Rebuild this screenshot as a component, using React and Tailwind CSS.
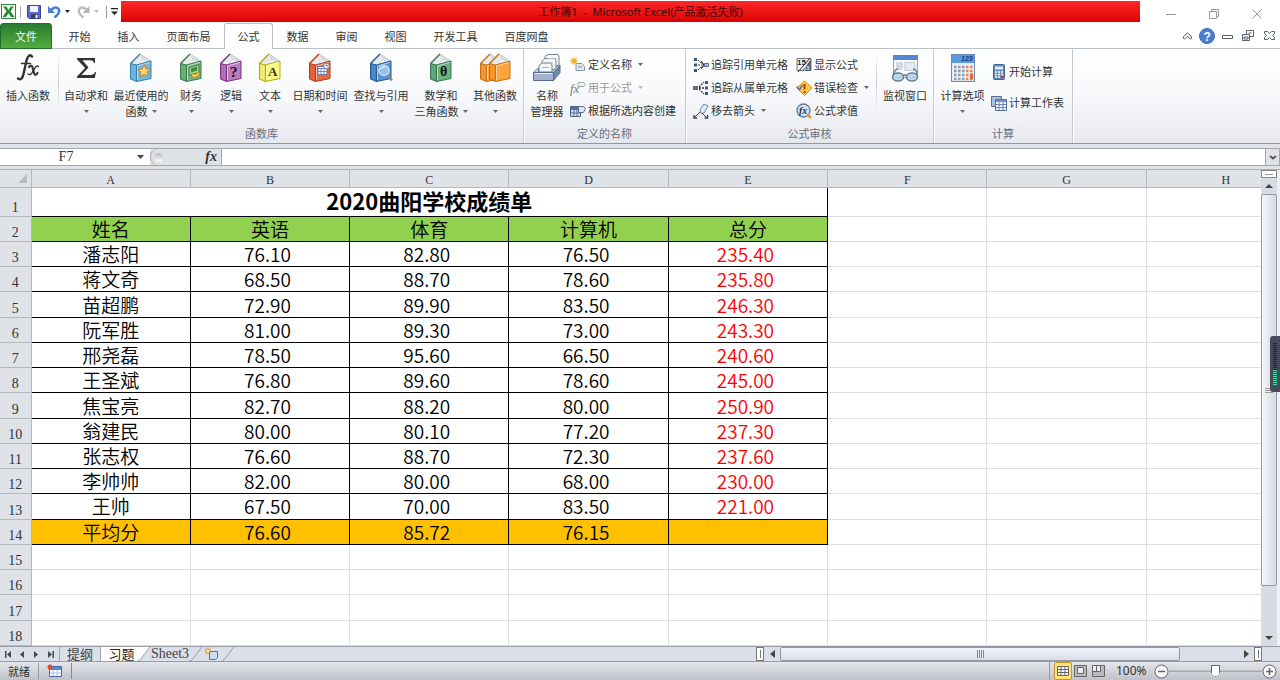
import { useState } from "react"

const tabs = [
  { name: "开始", width: "w-[49px]" },
  { name: "插入", width: "w-[49px]" },
  { name: "页面布局", width: "w-[71px]" },
  { name: "公式", width: "w-[49px]" },
  { name: "数据", width: "w-[49px]" },
  { name: "审阅", width: "w-[49px]" },
  { name: "视图", width: "w-[49px]" },
  { name: "开发工具", width: "w-[71px]" },
  { name: "百度网盘", width: "w-[71px]" },
]

const columns = ["A", "B", "C", "D", "E", "F", "G", "H"]

const students = [
  ["潘志阳", "76.10", "82.80", "76.50", "235.40"],
  ["蒋文奇", "68.50", "88.70", "78.60", "235.80"],
  ["苗超鹏", "72.90", "89.90", "83.50", "246.30"],
  ["阮军胜", "81.00", "89.30", "73.00", "243.30"],
  ["邢尧磊", "78.50", "95.60", "66.50", "240.60"],
  ["王圣斌", "76.80", "89.60", "78.60", "245.00"],
  ["焦宝亮", "82.70", "88.20", "80.00", "250.90"],
  ["翁建民", "80.00", "80.10", "77.20", "237.30"],
  ["张志权", "76.60", "88.70", "72.30", "237.60"],
  ["李帅帅", "82.00", "80.00", "68.00", "230.00"],
  ["王帅", "67.50", "70.00", "83.50", "221.00"],
]

function Arrow({ className = "text-[#666]" }) {
  return (
    <svg width="5" height="3" viewBox="0 0 5 3" className={`inline-block shrink-0 ${className}`}>
      <path d="M0 0h5L2.5 3z" fill="currentColor" />
    </svg>
  )
}

function Book({ side, front, edge, children }) {
  return (
    <svg width="24" height="30" viewBox="0 0 24 30">
      <path d="M1.500 10.500L11 1l10.500 7-14 4z" fill="#f7f9fa" stroke="#b4bcc4" strokeLinejoin="round" />
      <path d="M1.500 10.500L11 1" stroke={edge} strokeWidth="1.400" />
      <path d="M4 10l7.500-7 7.500 5M6.500 10.500L12.500 5l5 3.500M9 11l5-4.500" fill="none" stroke="#bcc4cc" strokeWidth=".8" />
      <path d="M1.500 10.500L7.500 12v16.500L1.500 26z" fill={side} stroke={edge} strokeLinejoin="round" />
      <path d="M3.500 12v13.500M5.500 12.500v14" stroke={front} strokeWidth=".8" />
      <path d="M7.500 12L22 8v17.500l-14.500 3z" fill={front} stroke={edge} strokeLinejoin="round" />
      <path d="M8.500 13v14M8.500 12.900L21 9.400" stroke="#fff" strokeOpacity=".55" />
      {children}
    </svg>
  )
}

function FxIcon() {
  return (
    <svg width="26" height="30" viewBox="0 0 26 30" fill="none" stroke="#333" strokeLinecap="round">
      <path d="M17 3.500c-2-2.500-4.500-.5-5.500 4L8.500 21c-1 4.500-3 6.500-5.500 4.500" strokeWidth="2.400" />
      <path d="M6.500 10.500h9" strokeWidth="1.500" />
      <path d="M14 14c2-2.500 3.500-1 4 2l1 4c.6 2.500 2 2.500 3.500 0" strokeWidth="2.200" />
      <path d="M23.500 13.500c-2-1.500-3 .5-5 4s-3 5-5.500 3.500" strokeWidth="1.300" />
    </svg>
  )
}

function SigmaIcon() {
  return (
    <svg width="26" height="30" viewBox="0 0 26 30">
      <path d="M4 5h18v5h-1c-.4-2-1-2.800-4-2.800H9.500l6 7.300-7 7.500h9c2.500 0 3.500-.8 4.500-3h1l-1.200 6H4v-1.500l8-8.500-8-8.800z" fill="#333" />
    </svg>
  )
}

function RecentIcon() {
  return (
    <Book side="#65b2dc" front="#74b9e4" edge="#347fae">
      <path d="M15 11.500l1.900 4.400 4.600.2-3.500 3 1.300 4.700-4.300-2.500-4.200 2.700 1.200-4.700-3.500-2.700 4.600-.6z" fill="#ffd778" stroke="#c57a12" strokeWidth=".9" />
    </Book>
  )
}

function FinanceIcon() {
  return (
    <Book side="#63a877" front="#75b482" edge="#3b7c4d">
      <path d="M10 14.500l10-3v8l-10 3z" fill="#9fd392" stroke="#356f36" strokeWidth=".8" />
      <path d="M12 15.500l6-2v4l-6 2z" fill="#3f8b45" />
      <path d="M12 22l3-1.500 1.500 1 3.500-3.500v4.500l-5 2.500z" fill="#ffd24a" stroke="#a97507" strokeWidth=".7" />
    </Book>
  )
}

function LogicIcon() {
  return (
    <Book side="#a966ae" front="#be79c1" edge="#79357f">
      <text x="11" y="24" fontSize="15" fontWeight="700" fontFamily="Liberation Serif" fill="#111">?</text>
    </Book>
  )
}

function TextIcon() {
  return (
    <Book side="#ece45c" front="#fbf67c" edge="#b5aa14">
      <text x="10" y="23" fontSize="13" fontWeight="700" fontFamily="Liberation Serif" fill="#333">A</text>
    </Book>
  )
}

function DateIcon() {
  return (
    <Book side="#e35b36" front="#ee6841" edge="#b33a1a">
      <path d="M10 13.500h9v8h-9z" fill="#fff" stroke="#54649a" strokeWidth=".8" />
      <path d="M10 15.500h9M13 15v6M16 15v6M10 18.500h9" stroke="#5577bd" strokeWidth=".8" />
      <circle cx="18.500" cy="13" r="2.800" fill="#f2f5ff" stroke="#666" strokeWidth=".7" />
      <path d="M18.500 11.500V13h1.500" stroke="#333" strokeWidth=".7" fill="none" />
    </Book>
  )
}

function LookupIcon() {
  return (
    <Book side="#3c7ec1" front="#5495d6" edge="#275a91">
      <path d="M18.500 21.500l4.500 6" stroke="#888" strokeWidth="2.400" />
      <circle cx="15" cy="17.500" r="5" fill="#9fcbf5" fillOpacity=".85" stroke="#d5dce3" strokeWidth="1.500" />
      <path d="M12.500 16q1-2.500 3.500-2" stroke="#fff" fill="none" />
    </Book>
  )
}

function MathIcon() {
  return (
    <Book side="#5a9f72" front="#6db183" edge="#387650">
      <text x="11" y="23" fontSize="14" fontWeight="700" fontFamily="Liberation Serif" fill="#111">θ</text>
    </Book>
  )
}

function MoreIcon() {
  return (
    <span className="flex -space-x-[15px]">
      <Book side="#ec8d22" front="#ffa33b" edge="#c57218" />
      <Book side="#ec8d22" front="#ffa33b" edge="#c57218" />
    </span>
  )
}

function NameManagerIcon() {
  return (
    <svg width="30" height="30" viewBox="0 0 30 30">
      <g fill="#f5f8fb" stroke="#76828f">
        <path d="M13 3.500l3-2h10l1 2v9H13z" />
        <path d="M10 8l3-2.500h10l1 2v9H10z" />
        <path d="M7 12.500L10 10h9l1 2v8H7z" />
      </g>
      <path d="M16 5.500h8M13 10h8M10 14.500h7" stroke="#aab4be" />
      <path d="M1.500 19.500l5-4.500v4h13l7-7 1.500 1-6 7z" fill="#cbd7e8" stroke="#687b98" />
      <path d="M1.500 19.500h20v8h-20z" fill="#a3b3cf" stroke="#52688d" />
      <path d="M2.500 20.500h18" stroke="#eef3fa" />
      <path d="M21.500 19.500l6.500-7v7l-6.500 8z" fill="#7188ad" stroke="#52688d" />
    </svg>
  )
}

function WatchIcon() {
  return (
    <svg width="30" height="30" viewBox="0 0 30 30">
      <path d="M3.500 2.500h24v22h-24z" fill="#f8fafc" stroke="#8ea5c0" />
      <path d="M3 2h25v5H3z" fill="#5486d8" />
      <path d="M6 10h7M6 12h7M6 14h7M6 16h6" stroke="#aeb9c4" />
      <path d="M15 9.500h10v8H15z" fill="#e5ecf3" stroke="#c1cad2" />
      <g fill="#afd2ec" fillOpacity=".85" stroke="#6d7e8b" strokeWidth="1.500">
        <ellipse cx="8" cy="24" rx="5.500" ry="4" />
        <ellipse cx="22" cy="24" rx="5.500" ry="4" />
      </g>
      <path d="M13 23q2-2 4 0M3 22q2-6 5-6M27 22q0-6-4-6" fill="none" stroke="#697986" strokeWidth="1.300" />
    </svg>
  )
}

function CalcOptionsIcon() {
  return (
    <svg width="26" height="30" viewBox="0 0 26 30">
      <rect x="1.500" y="1.500" width="23" height="27" fill="#e5effa" stroke="#6a8bb8" />
      <path d="M2 2h22v8H2z" fill="#5c97e4" />
      <text x="11" y="8" fontSize="7" fontStyle="italic" fontWeight="700" fontFamily="Liberation Sans" fill="#17408a">123</text>
      <g strokeWidth="2.500" strokeDasharray="2.500 1.500">
        <path d="M4 14h11M4 18h11M4 22h11M4 26h11" stroke="#929daa" />
        <path d="M16 14h7M16 18h7M16 22h7M16 26h7" stroke="#e78b4b" />
      </g>
      <path d="M20 20.500h3v6h-3z" fill="#e8663d" />
    </svg>
  )
}

function SmallIcon({ children }) {
  return <svg width="16" height="16" viewBox="0 0 16 16" className="shrink-0">{children}</svg>
}

const defineNameIcon = (
  <SmallIcon>
    <path d="M6 6.500h6l2.500 3v4H6z" fill="#dce7f2" stroke="#8b97a5" />
    <path d="M8 10h4" stroke="#7e8a98" />
    <path d="M4 .5v7M.5 4h7M1.500 1.500l5 5M6.500 1.500l-5 5" stroke="#f0b323" strokeWidth="1.400" />
  </SmallIcon>
)

const useInFormulaIcon = (
  <SmallIcon>
    <text x="0" y="13" fontSize="13" fontStyle="italic" fontFamily="Liberation Serif" fill="#777">fx</text>
    <path d="M8 2.500h6l1.500 2-1.500 2H8z" fill="#f1f1f1" stroke="#aaa" />
  </SmallIcon>
)

const createIcon = (
  <SmallIcon>
    <path d="M.5 3.500h10v10H.5z" fill="#cdd9ee" stroke="#4f6287" />
    <path d="M1 4h9v3H1z" fill="#5873a8" />
    <path d="M1 10h9M4 7v6M7 7v6" stroke="#5f729a" />
    <path d="M8.500 3.500h5l2 2-2 4h-5z" fill="#dce7f2" stroke="#5f718b" />
  </SmallIcon>
)

const precedentsIcon = (
  <SmallIcon>
    <path d="M1 1h3v3H1zM1 6.500h3v3H1zM1 12h3v3H1z" fill="#3c5376" />
    <path d="M5 3l3 3M5 8h4M5 13l3-3" stroke="#333" strokeDasharray="2 1" />
    <path d="M8 4.500l3 3.500-3 3.500" fill="none" stroke="#333" strokeWidth="1.300" />
    <path d="M11.500 6.500h4v3h-4z" fill="#a9bcd4" stroke="#546e91" />
  </SmallIcon>
)

const dependentsIcon = (
  <SmallIcon>
    <path d="M12 1h3v3h-3zM12 6.500h3v3h-3zM12 12h3v3h-3z" fill="#3c5376" />
    <path d="M6 7l5-5M6 8h5M6 9l5 5" stroke="#333" strokeWidth="1.300" strokeDasharray="2 1" />
    <path d="M0 6h5v4H0z" fill="#546e91" />
  </SmallIcon>
)

const removeArrowsIcon = (
  <SmallIcon>
    <path d="M7 7l4-6 4 2-4 7-3 .5z" fill="#e4ebf8" stroke="#6d7d99" />
    <path d="M7 9l-5 5M9 10l4 4" stroke="#334a6b" fill="none" />
    <path d="M1 12v3h3M14.500 12v3h-3" stroke="#334a6b" fill="none" strokeWidth="1.500" />
  </SmallIcon>
)

const showFormulasIcon = (
  <SmallIcon>
    <path d="M1 1.500h14v12H1z" fill="#f6f6f6" stroke="#777" />
    <path d="M15 2v12H6z" fill="#53627a" />
    <text x="1" y="8" fontSize="8" fontWeight="700" fontFamily="Liberation Sans" fill="#222">15</text>
    <text x="8" y="13" fontSize="8" fontStyle="italic" fontFamily="Liberation Serif" fill="#fff">fx</text>
    <path d="M2 15L14 1" stroke="#222" />
  </SmallIcon>
)

const errorCheckIcon = (
  <SmallIcon>
    <path d="M8.500 1L16 8l-7.500 7.500L1 8z" fill="#ffcb45" stroke="#d28a12" />
    <path d="M8.500 4v5.500M8.500 11v2" stroke="#c8321a" strokeWidth="2" />
    <path d="M.5 6.500l3 3.500 3-5" fill="none" stroke="#5874a0" strokeWidth="1.500" />
  </SmallIcon>
)

const evaluateIcon = (
  <SmallIcon>
    <circle cx="7.500" cy="7.500" r="6.500" fill="#cfe4fa" stroke="#66788c" strokeWidth="1.300" />
    <text x="3" y="11" fontSize="10" fontWeight="700" fontStyle="italic" fontFamily="Liberation Serif" fill="#26354a">fx</text>
    <path d="M12 12l3 3" stroke="#e29632" strokeWidth="2.500" />
  </SmallIcon>
)

const calcNowIcon = (
  <SmallIcon>
    <rect x="2.500" y=".5" width="11" height="15" rx="1" fill="#6689bd" stroke="#45638f" />
    <path d="M4 2.500h8v3H4z" fill="#dbe9f8" />
    <path d="M4 8h8M4 10.500h8M4 13h8" stroke="#fff" strokeWidth="1.500" strokeDasharray="2 1" />
    <path d="M10 12h2v2h-2z" fill="#da3a2c" />
  </SmallIcon>
)

const calcSheetIcon = (
  <SmallIcon>
    <path d="M.5 1.500h10v10H.5z" fill="#a9bfe0" stroke="#5c7094" />
    <path d="M4.500 4.500h11v11h-11z" fill="#f3f7ff" stroke="#526f9e" />
    <path d="M5 5h10v2H5z" fill="#7694c5" />
    <path d="M8 5v10M12 5v10M5 9.500h10M5 12.500h10" stroke="#6d86b0" />
  </SmallIcon>
)

// a large ribbon button, the second line is either text or the drop arrow
function BigButton({ icon, label, second, arrow, width }) {
  return (
    <button type="button" className={`flex shrink-0 flex-col items-center whitespace-nowrap ${width}`}>
      <span className="flex h-8 items-center justify-center">{icon}</span>
      <span className="mt-[3px] leading-4">{label}</span>
      <span className="flex h-4 items-center gap-1 leading-4">
        {second}
        {arrow && <Arrow />}
      </span>
    </button>
  )
}

function SmallButton({ icon, label, arrow, disabled }) {
  return (
    <button
      type="button"
      disabled={disabled}
      className="flex h-[23px] items-center gap-[2px] whitespace-nowrap disabled:text-[#999]"
    >
      {icon}
      <span>{label}</span>
      {arrow && <Arrow className={disabled ? "ml-1 text-[#bbb]" : "ml-1 text-[#666]"} />}
    </button>
  )
}

function Group({ title, width, children }) {
  return (
    <section className={`flex shrink-0 flex-col border-r border-[#c5cad0] shadow-[1px_0_0_#fff] ${width}`}>
      <div className="flex flex-1 pt-[3px]">{children}</div>
      <h2 className="h-5 text-center leading-5 text-[#666e7c]">{title}</h2>
    </section>
  )
}

function Divider() {
  return <div className="mx-[2px] h-[60px] w-px shrink-0 bg-linear-to-b from-transparent via-[#c8ccd1] to-transparent" />
}

function TitleBar() {
  return (
    <header className="flex h-[23px] shrink-0 bg-white">
      <div className="flex w-[121px] shrink-0 items-center pl-px">
        <svg width="16" height="16" viewBox="0 0 16 16">
          <rect x=".5" y=".5" width="14" height="14" fill="#f4faf3" stroke="#348242" />
          <path d="M2 2.500h3.500l2 3.500 2.200-3.500h3L9.500 7.300l4 5.700H10L7.500 9.300 5 13H1.500l4-5.700z" fill="#298a36" />
        </svg>
        <span className="ml-[3px] h-3 w-px bg-[#aaa]" />
        <button type="button" aria-label="保存" className="ml-[6px]">
          <svg width="14" height="14" viewBox="0 0 14 14">
            <path d="M.5.5h13v13H2L.5 12z" fill="#5a6ad0" stroke="#3b479f" />
            <path d="M3 1h8v6H3z" fill="#eef2ff" />
            <path d="M4 9h7v4.500H4z" fill="#3b3f66" />
            <path d="M8.500 10h2v3h-2z" fill="#fff" />
          </svg>
        </button>
        <button type="button" aria-label="撤消" className="ml-[7px]">
          <svg width="13" height="14" viewBox="0 0 13 14">
            <path d="M0 1v7h7z" fill="#4a80d6" />
            <path d="M3 5q5-4.500 7.500-1t-4 8.500" fill="none" stroke="#4a80d6" strokeWidth="2.600" />
          </svg>
        </button>
        <Arrow className="ml-1 text-[#222]" />
        <button type="button" aria-label="恢复" className="ml-[7px]">
          <svg width="13" height="14" viewBox="0 0 13 14">
            <path d="M12.500 1v7h-7z" fill="#b5b5b5" />
            <path d="M10 5Q5 .5 2.500 4t4 8.500" fill="none" stroke="#bdbdbd" strokeWidth="2.400" />
          </svg>
        </button>
        <Arrow className="ml-1 text-[#bbb]" />
        <span className="ml-[7px] h-3 w-px bg-[#999]" />
        <button type="button" aria-label="自定义快速访问工具栏" className="ml-1">
          <svg width="7" height="8" viewBox="0 0 7 8">
            <path d="M0 0h7v1.300H0zM0 3.500h7L3.500 7z" fill="#222" />
          </svg>
        </button>
      </div>
      <h1 className="mt-px mb-px flex-1 bg-linear-to-b from-[#ff2626] to-[#dc0000] pl-5 text-center font-['Noto_Sans','Noto_Sans_CJK_SC',sans-serif] text-[11px] leading-[21px] text-[#3a0505]">
        工作簿1 &nbsp;-&nbsp; Microsoft Excel(产品激活失败)
      </h1>
      <div className="flex w-[140px] shrink-0 items-center justify-between pt-1 pr-[18px] pl-[26px] text-[#999]">
        <button type="button" aria-label="最小化">
          <svg width="10" height="10" viewBox="0 0 10 10"><path d="M0 5.500h10" stroke="currentColor" /></svg>
        </button>
        <button type="button" aria-label="还原">
          <svg width="10" height="10" viewBox="0 0 10 10" fill="none" stroke="currentColor">
            <path d="M.5 2.500h7v7h-7zM2.500 2.500v-2h7v7h-2" />
          </svg>
        </button>
        <button type="button" aria-label="关闭">
          <svg width="10" height="10" viewBox="0 0 10 10"><path d="M.5.5l9 9M9.500.5l-9 9" stroke="currentColor" /></svg>
        </button>
      </div>
    </header>
  )
}

function TabBar({ active, onSelect }) {
  return (
    <nav className="flex h-[26px] shrink-0 border-b border-[#b9c0c9] bg-white">
      <button
        type="button"
        className="mr-[3px] h-[26px] w-[52px] rounded-t-[3px] border border-[#1f6f2b] bg-linear-to-b from-[#2b7c33] to-[#52ad3d] text-white"
      >
        文件
      </button>
      {tabs.map(({ name, width }) => (
        <button
          key={name}
          type="button"
          onClick={() => onSelect(name)}
          className={`${width} h-[26px] ${
            name === active ? "rounded-t-[3px] border border-b-0 border-[#b9c0c9] bg-white" : ""
          }`}
        >
          {name}
        </button>
      ))}
      <div className="ml-auto flex items-center gap-[7px] pr-[5px] text-[#59616b]">
        <button type="button" aria-label="功能区最小化">
          <svg width="9" height="8" viewBox="0 0 9 8" fill="none" stroke="currentColor">
            <path d="M.5 4.500l4-3.500 4 3.500v2l-1 .5-3-2.500L1.500 7l-1-.5z" />
          </svg>
        </button>
        <button type="button" aria-label="帮助">
          <svg width="16" height="16" viewBox="0 0 16 16">
            <circle cx="8" cy="8" r="7.500" fill="#4a7dd0" stroke="#3a69b5" />
            <text x="4.500" y="12.500" fontSize="12" fontWeight="700" fontFamily="Liberation Sans" fill="#fff">?</text>
          </svg>
        </button>
        <button type="button" aria-label="最小化工作簿">
          <svg width="11" height="10" viewBox="0 0 11 10" fill="#fff" stroke="currentColor"><path d="M.5 4.500h10v3H.5z" /></svg>
        </button>
        <button type="button" aria-label="还原工作簿" className="ml-[2px]">
          <svg width="12" height="11" viewBox="0 0 12 11" fill="#fff" stroke="currentColor">
            <path d="M4.500.5h7v6h-7z" />
            <path d="M.5 4.500h7v6h-7zM2 7h4v2H2zM6.500 3h3" />
          </svg>
        </button>
        <button type="button" aria-label="关闭工作簿" className="ml-[3px]">
          <svg width="11" height="9" viewBox="0 0 11 9" fill="#fff" stroke="currentColor">
            <path d="M.5.5h3l2 2 2-2h3v2l-2 2 2 2v2h-3l-2-2-2 2h-3v-2l2-2-2-2z" />
          </svg>
        </button>
      </div>
    </nav>
  )
}

function Ribbon() {
  return (
    <div className="flex h-[95px] shrink-0 overflow-hidden border-b border-[#9298a3] bg-linear-to-b from-white via-[#f8f9fb] to-[#e5e8ed]">
      <Group title="函数库" width="w-[524px]">
        <BigButton icon={<FxIcon />} label="插入函数" width="w-[56px]" />
        <Divider />
        <BigButton icon={<SigmaIcon />} label="自动求和" arrow width="w-[50px]" />
        <BigButton icon={<RecentIcon />} label="最近使用的" second="函数" arrow width="w-[60px]" />
        <BigButton icon={<FinanceIcon />} label="财务" arrow width="w-[40px]" />
        <BigButton icon={<LogicIcon />} label="逻辑" arrow width="w-[40px]" />
        <BigButton icon={<TextIcon />} label="文本" arrow width="w-[38px]" />
        <BigButton icon={<DateIcon />} label="日期和时间" arrow width="w-[62px]" />
        <BigButton icon={<LookupIcon />} label="查找与引用" arrow width="w-[60px]" />
        <BigButton icon={<MathIcon />} label="数学和" second="三角函数" arrow width="w-[60px]" />
        <BigButton icon={<MoreIcon />} label="其他函数" arrow width="w-[48px]" />
      </Group>
      <Group title="定义的名称" width="w-[162px]">
        <BigButton icon={<NameManagerIcon />} label="名称" second="管理器" width="w-[46px]" />
        <div className="pt-px">
          <SmallButton icon={defineNameIcon} label="定义名称" arrow />
          <SmallButton icon={useInFormulaIcon} label="用于公式" arrow disabled />
          <SmallButton icon={createIcon} label="根据所选内容创建" />
        </div>
      </Group>
      <Group title="公式审核" width="w-[248px]">
        <div className="ml-[7px] w-[103px] pt-px">
          <SmallButton icon={precedentsIcon} label="追踪引用单元格" />
          <SmallButton icon={dependentsIcon} label="追踪从属单元格" />
          <SmallButton icon={removeArrowsIcon} label="移去箭头" arrow />
        </div>
        <div className="w-[78px] pt-px">
          <SmallButton icon={showFormulasIcon} label="显示公式" />
          <SmallButton icon={errorCheckIcon} label="错误检查" arrow />
          <SmallButton icon={evaluateIcon} label="公式求值" />
        </div>
        <Divider />
        <BigButton icon={<WatchIcon />} label="监视窗口" width="w-[52px]" />
      </Group>
      <Group title="计算" width="w-[139px]">
        <BigButton icon={<CalcOptionsIcon />} label="计算选项" arrow width="w-[57px]" />
        <div className="flex flex-col gap-2 pt-2">
          <SmallButton icon={calcNowIcon} label="开始计算" />
          <SmallButton icon={calcSheetIcon} label="计算工作表" />
        </div>
      </Group>
    </div>
  )
}

function FormulaBar() {
  return (
    <div className="flex h-[26px] shrink-0 border-b border-[#a9afb8] bg-[#dfe3e8] pt-1 pb-[3px]">
      <div className="flex flex-1 border-y border-[#a3a8b0]">
        <div className="flex w-[150px] items-center bg-white">
          <input
            aria-label="名称框"
            defaultValue="F7"
            className="w-[132px] bg-transparent text-center font-['Liberation_Serif','Noto_Sans_CJK_SC',serif] text-[14px] leading-4 outline-none"
          />
          <button type="button" aria-label="名称列表" className="flex items-center pl-[5px]">
            <svg width="7" height="4" viewBox="0 0 7 4"><path d="M0 0h7L3.500 4z" fill="#444" /></svg>
          </button>
        </div>
        <div className="flex w-[72px] items-center justify-between rounded-l-full border-r border-l border-[#a3a8b0] bg-[#dfe3e8] pr-1 pl-[3px]">
          <span className="size-[9px] rounded-full bg-linear-to-b from-[#b6bac0] to-white" />
          <button
            type="button"
            aria-label="插入函数"
            className="font-['Liberation_Serif',serif] text-[14px] leading-4 font-bold text-[#333] italic"
          >
            fx
          </button>
        </div>
        <input aria-label="编辑栏" className="min-w-0 flex-1 bg-white px-1 outline-none" />
        <button type="button" aria-label="展开编辑栏" className="flex w-[15px] items-center justify-center border-x border-[#a3a8b0]">
          <svg width="8" height="5" viewBox="0 0 8 5"><path d="M1 1l3 2.500L7 1" fill="none" stroke="#555" strokeWidth="1.800" /></svg>
        </button>
      </div>
    </div>
  )
}

function EmptyCells({ count }) {
  return Array.from({ length: count }, (_, i) => <td key={i} className="border border-[#dcdee1]" />)
}

function RowHead({ n }) {
  return (
    <th
      scope="row"
      className="border-r border-b border-[#b4b9c0] bg-[#dfe3e8] align-bottom font-['Liberation_Serif',serif] text-[14px] leading-4 font-normal text-[#333]"
    >
      {n}
    </th>
  )
}

function Sheet() {
  return (
    <table className="h-full w-[1306px] table-fixed border-collapse text-[19px] leading-[22px] font-[350] text-black">
      <colgroup>
        <col className="w-[31px]" />
        {columns.map((c) => <col key={c} />)}
      </colgroup>
      <thead>
        <tr className="h-[17px] bg-[#dfe3e8] font-['Liberation_Serif',serif] text-[12px] leading-[14px] text-[#333]">
          <th className="border-r border-b border-[#b4b9c0]">
            <svg width="9" height="9" viewBox="0 0 9 9" className="ml-auto mr-1"><path d="M9 0v9H0z" fill="#b7bcc2" /></svg>
          </th>
          {columns.map((c) => (
            <th key={c} scope="col" className="border-r border-b border-[#b4b9c0] align-bottom font-normal">{c}</th>
          ))}
        </tr>
      </thead>
      <tbody>
        <tr className="h-[29px]">
          <RowHead n={1} />
          <td colSpan={5} className="border-r border-b border-black pb-[3px] text-center text-[22px] font-bold text-black">
            2020曲阳学校成绩单
          </td>
          <EmptyCells count={3} />
        </tr>
        <tr className="h-[25px]">
          <RowHead n={2} />
          {["姓名", "英语", "体育", "计算机", "总分"].map((h) => (
            <td key={h} className="border border-black bg-[#92d050] text-center">{h}</td>
          ))}
          <EmptyCells count={3} />
        </tr>
        {students.map(([name, ...scores], i) => (
          <tr key={name} className="h-[25px]">
            <RowHead n={i + 3} />
            <td className="border border-black text-center">{name}</td>
            {scores.map((score, j) => (
              <td key={j} className={`border border-black pr-[5px] text-center ${j === 3 ? "text-[#ff0000]" : ""}`}>
                {score}
              </td>
            ))}
            <EmptyCells count={3} />
          </tr>
        ))}
        <tr className="h-[25px]">
          <RowHead n={14} />
          <td className="border border-black bg-[#ffc000] text-center">平均分</td>
          {["76.60", "85.72", "76.15", ""].map((avg, j) => (
            <td key={j} className="border border-black bg-[#ffc000] pr-[5px] text-center">{avg}</td>
          ))}
          <EmptyCells count={3} />
        </tr>
        {[15, 16, 17, 18].map((n) => (
          <tr key={n} className="h-[25px]">
            <RowHead n={n} />
            <EmptyCells count={8} />
          </tr>
        ))}
      </tbody>
    </table>
  )
}

function VerticalScroll() {
  return (
    <div className="flex w-[19px] shrink-0 flex-col border-r-[3px] border-[#eef0f2] bg-[#d7dbe3]">
      <span className="flex h-2 items-center justify-center border border-[#888] bg-white">
        <span className="h-px w-2 bg-[#999]" />
      </span>
      <button type="button" aria-label="向上滚动" className="flex h-4 items-center justify-center">
        <svg width="8" height="4" viewBox="0 0 8 4"><path d="M0 4h8L4 0z" fill="#444" /></svg>
      </button>
      <div className="flex flex-[392] flex-col items-center justify-center gap-px rounded-[2px] border border-[#9299a8] bg-linear-to-r from-[#f4f6fa] to-[#d5dae4]">
        <span className="h-px w-2 bg-[#999]" />
        <span className="h-px w-2 bg-[#999]" />
        <span className="h-px w-2 bg-[#999]" />
      </div>
      <div className="flex-[44]" />
      <button type="button" aria-label="向下滚动" className="flex h-4 items-center justify-center">
        <svg width="8" height="4" viewBox="0 0 8 4"><path d="M0 0h8L4 4z" fill="#444" /></svg>
      </button>
    </div>
  )
}

function NavArrow({ label, d }) {
  return (
    <button type="button" aria-label={label}>
      <svg width="7" height="7" viewBox="0 0 7 7"><path d={d} fill="#444b55" /></svg>
    </button>
  )
}

function TabEdge({ fill = "none" }) {
  return (
    <svg width="14" height="14" viewBox="0 0 14 14" className="shrink-0">
      <path d="M0 0h13L3 13q-1 1-3 1z" fill={fill} />
      <path d="M13 0L3 13q-1 1-3 1" fill="none" stroke="#9aa0aa" />
    </svg>
  )
}

function SheetTabs() {
  return (
    <div className="flex h-4 shrink-0 border-t border-b border-[#979ca6] bg-[#dbdfe7] text-[13px] leading-[14px]">
      <div className="flex w-[60px] shrink-0 items-center gap-[7px] border-r border-[#a3a8b0] pl-[5px]">
        <NavArrow label="第一张" d="M0 0h1.500v7H0zM6 0v7L2 3.500z" />
        <NavArrow label="上一张" d="M5 0v7L1 3.500z" />
        <NavArrow label="下一张" d="M1 0v7l4-3.500z" />
        <NavArrow label="最后一张" d="M1 0v7l4-3.500zM5.500 0H7v7H5.500z" />
      </div>
      <button type="button" className="w-[41px] border-r border-[#a3a8b0] text-[#444]">提纲</button>
      <button type="button" className="w-9 bg-white pl-[5px] text-[#222]">习题</button>
      <TabEdge fill="#fff" />
      <button type="button" className="font-['Liberation_Serif',serif] text-[14px] text-[#444]">Sheet3</button>
      <TabEdge />
      <button type="button" aria-label="插入工作表" className="flex items-center">
        <svg width="18" height="14" viewBox="0 0 18 14">
          <path d="M6.500 4.500h8v6l-2 2h-6z" fill="#cfdcf2" stroke="#56739f" />
          <path d="M5 .5v7M1.500 4h7M2.500 1.500l5 5M7.500 1.500l-5 5" stroke="#e08a1e" />
          <circle cx="5" cy="4" r="1.200" fill="#fff3b0" />
        </svg>
      </button>
      <TabEdge />
      <div className="ml-auto flex w-[524px] shrink-0">
        <span className="flex w-[8px] items-center justify-center border border-[#777] bg-white"><span className="h-2 w-px bg-[#777]" /></span>
        <button type="button" aria-label="向左滚动" className="flex w-4 items-center justify-center">
          <svg width="5" height="8" viewBox="0 0 5 8"><path d="M5 0v8L0 4z" fill="#444" /></svg>
        </button>
        <div className="flex w-[400px] items-center justify-center gap-px rounded-[2px] border border-[#9299a8] bg-linear-to-b from-[#f2f4f9] to-[#d9dde6]">
          <span className="h-2 w-px bg-[#888]" />
          <span className="h-2 w-px bg-[#888]" />
          <span className="h-2 w-px bg-[#888]" />
          <span className="h-2 w-px bg-[#888]" />
        </div>
        <button type="button" aria-label="向右滚动" className="ml-auto flex w-4 items-center justify-center">
          <svg width="5" height="8" viewBox="0 0 5 8"><path d="M0 0v8l5-4z" fill="#444" /></svg>
        </button>
        <span className="mr-[18px] flex w-[8px] items-center justify-center border border-[#777] bg-white"><span className="h-2 w-px bg-[#777]" /></span>
      </div>
    </div>
  )
}

function StatusBar() {
  const [zoom, setZoom] = useState(50)

  return (
    <footer className="flex h-[18px] shrink-0 items-center bg-linear-to-b from-[#e3e5ea] to-[#bfc3c9] text-[#333]">
      <span className="w-[39px] border-r border-[#999] pl-2 leading-4">就绪</span>
      <button type="button" aria-label="录制宏" className="flex h-4 w-[33px] items-center border-r border-[#888] pl-2">
        <svg width="16" height="14" viewBox="0 0 16 14">
          <path d="M2.500 2.500h12v10h-12z" fill="#f7faff" stroke="#4b69a0" />
          <path d="M3 3h11v3H3z" fill="#5d86cf" />
          <path d="M3 9h11M6 6v6M10 6v6" stroke="#b0c0dc" />
          <circle cx="3" cy="3" r="2.500" fill="#dc4a30" />
        </svg>
      </button>
      <div className="ml-auto flex h-full items-center border-l border-[#999] pl-1">
        <button type="button" aria-label="普通" className="flex size-[18px] items-center justify-center rounded-[2px] border border-[#c6952a] bg-[#ffe377]">
          <svg width="12" height="10" viewBox="0 0 12 10" fill="#fff" stroke="#666"><path d="M.5.5h11v9H.5zM0 3.500h12M0 6.500h12M4 0v10M8 0v10" /></svg>
        </button>
        <button type="button" aria-label="页面布局" className="ml-[2px]">
          <svg width="14" height="12" viewBox="0 0 14 12" fill="#bbb" stroke="#666"><path d="M.5.5h12v11H.5z" /><path d="M3.500 2.500h6v6h-6z" fill="#eee" /></svg>
        </button>
        <button type="button" aria-label="分页预览" className="ml-1">
          <svg width="14" height="12" viewBox="0 0 14 12" fill="#bbb" stroke="#666"><path d="M.5.5h12v11H.5z" /><path d="M.5.5h4v6h-4zM4.500.5h4v6h-4z" fill="#eee" /></svg>
        </button>
        <span className="ml-[10px] w-[31px] font-['Noto_Sans',sans-serif] text-[12px] leading-4">100%</span>
        <button type="button" aria-label="缩小" className="ml-[7px]">
          <svg width="15" height="15" viewBox="0 0 15 15" fill="#f8f8f8" stroke="#666"><circle cx="7.500" cy="7.500" r="6.500" /><path d="M4 7.500h7" strokeWidth="1.500" /></svg>
        </button>
        <input
          type="range"
          aria-label="缩放"
          value={zoom}
          onChange={(e) => setZoom(e.target.value)}
          className="h-[14px] w-[93px] appearance-none bg-linear-to-b from-transparent from-45% via-[#888f99] via-50% to-transparent to-60% [&::-webkit-slider-thumb]:h-3 [&::-webkit-slider-thumb]:w-[9px] [&::-webkit-slider-thumb]:appearance-none [&::-webkit-slider-thumb]:border [&::-webkit-slider-thumb]:border-[#666] [&::-webkit-slider-thumb]:bg-white [&::-webkit-slider-thumb]:[clip-path:polygon(0_0,100%_0,100%_65%,50%_100%,0_65%)]"
        />
        <button type="button" aria-label="放大" className="mr-[3px]">
          <svg width="15" height="15" viewBox="0 0 15 15" fill="#f8f8f8" stroke="#666"><circle cx="7.500" cy="7.500" r="6.500" /><path d="M4 7.500h7M7.500 4v7" strokeWidth="1.500" /></svg>
        </button>
      </div>
    </footer>
  )
}

export default function App() {
  const [active, setActive] = useState("公式")

  return (
    <div className="relative flex h-screen flex-col overflow-hidden bg-white font-['Noto_Sans_CJK_SC',sans-serif] text-[11px] text-[#333]">
      <TitleBar />
      <TabBar active={active} onSelect={setActive} />
      <Ribbon />
      <FormulaBar />
      <main className="flex min-h-0 flex-1">
        <div className="min-w-0 flex-1 overflow-hidden">
          <Sheet />
        </div>
        <VerticalScroll />
      </main>
      <SheetTabs />
      <StatusBar />
      {/* volume meter docked at the screen edge */}
      <div className="absolute top-1/2 right-0 flex h-14 w-[10px] -translate-y-1 flex-col items-center justify-center rounded-l-[3px] bg-[#454b5a]">
        <div className="h-[27px] w-1 bg-[repeating-linear-gradient(#20242e_0_1px,#454b5a_1px_2px)]" />
        <div className="h-[15px] w-1 bg-[repeating-linear-gradient(#4fd6a6_0_1px,#454b5a_1px_2px)]" />
      </div>
    </div>
  )
}
